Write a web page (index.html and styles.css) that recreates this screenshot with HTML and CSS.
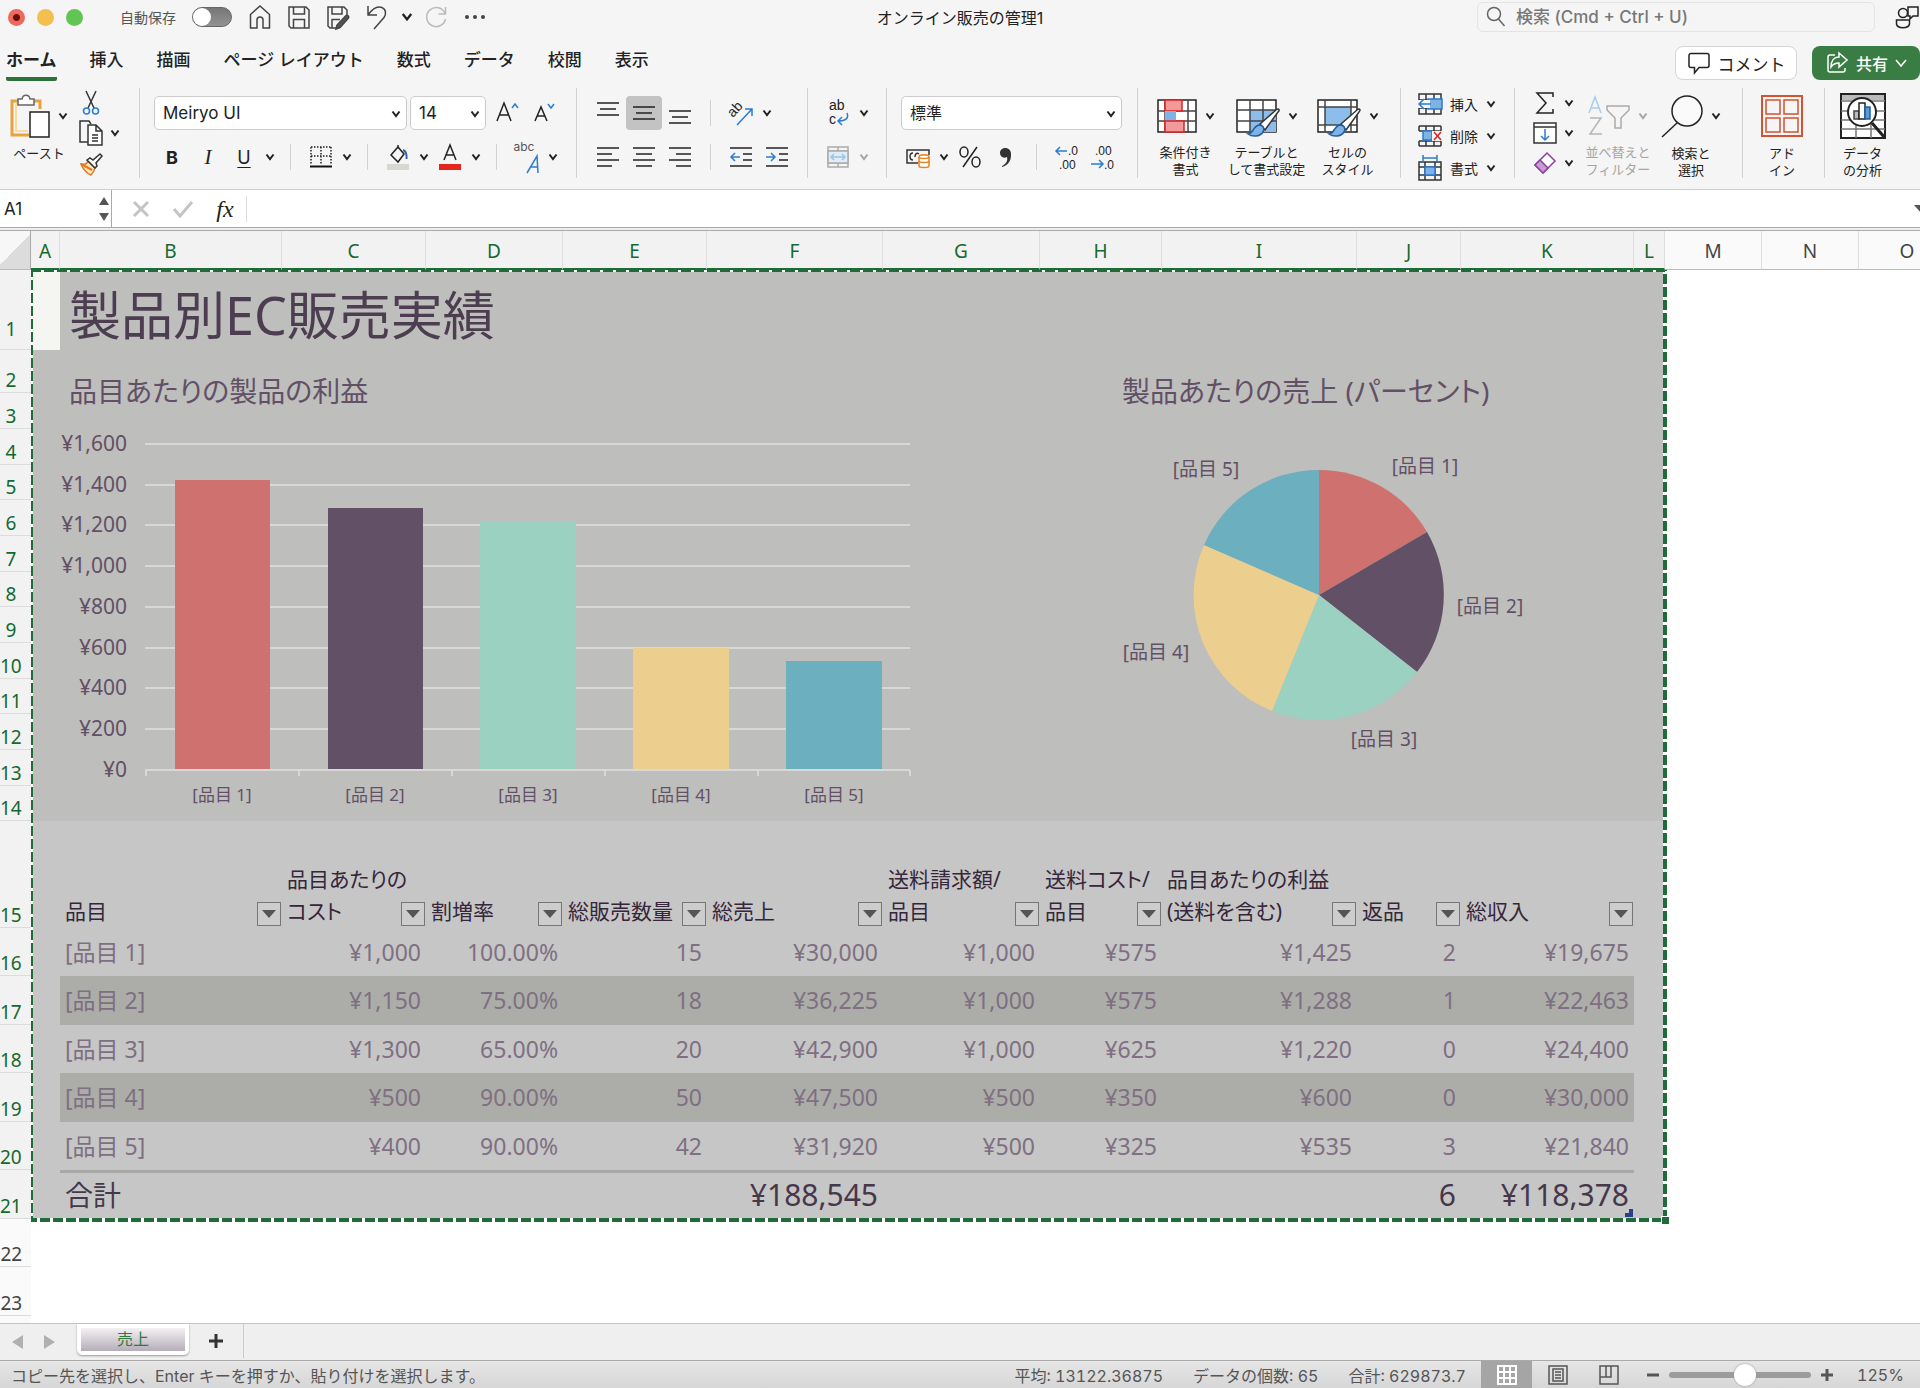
FILE: index.html
```html
<!doctype html>
<html lang="ja">
  <head>
    <meta charset="UTF-8" />
    <meta name="viewport" content="width=device-width, initial-scale=1.0" />
    <title>オンライン販売の管理1</title>
    <link rel="stylesheet" href="styles.css">
  </head>
  <body>
    <svg class="defs" aria-hidden="true">
      <symbol id="chev" viewBox="0 0 10 10"><path d="M1.5 2.5L5 7l3.500-4.500" fill="none" stroke="currentColor" stroke-width="2" /></symbol>
      <symbol id="drop" viewBox="0 0 14 10"><path d="M0 1h14L7 9z" fill="currentColor" /></symbol>
    </svg>

    <header class="titlebar">
      <div class="lights"><i class="red"></i><i class="yellow"></i><i class="green"></i></div>
      <label class="autosave">自動保存 <input type="checkbox" class="toggle" /></label>
      <div class="quick">
        <button aria-label="ホーム"><svg width="24" height="26" viewBox="0 0 24 26"><path d="M2.500 10.500L12 2l9.500 8.500V24H15v-8a3 3 0 0 0-6 0v8H2.500z" /></svg></button>
        <button aria-label="保存"><svg width="24" height="26" viewBox="0 0 24 26"><path d="M2 3h17l3 3v18H4l-2-2zM6.500 3v7h11V3M6.500 24v-8.500h11V24" /></svg></button>
        <button aria-label="名前を付けて保存"><svg width="24" height="26" viewBox="0 0 24 26"><path d="M11 24H4l-2-2V3h16l3 3v5M6 3v7h10V3M6 24v-8.500h8" /><path d="M10 25l1-4L20 11.500c1.500-1 3.500 1 2.500 2.500L14 23.500z" fill="#555" /></svg></button>
        <button aria-label="元に戻す"><svg width="24" height="26" viewBox="0 0 24 26"><path d="M3 2v9h9M3.500 10.500C8 4 13 2 17 3.500c4 2 4.500 6 2 10L9 25" /></svg></button>
        <button class="arrow" aria-label="元に戻すの履歴"><svg width="12" height="12"><use href="#chev" /></svg></button>
        <button class="off" aria-label="やり直し"><svg width="24" height="26" viewBox="0 0 24 26"><path d="M21.500 3v7h-7M21 9.500A9.500 9.500 0 1 0 21.500 15" /></svg></button>
        <button class="more" aria-label="その他"><svg width="24" height="26" viewBox="0 0 24 26"><g fill="#444" stroke="none"><circle cx="4" cy="13" r="2" /><circle cx="12" cy="13" r="2" /><circle cx="20" cy="13" r="2" /></g></svg></button>
      </div>
      <div class="doc-title">オンライン販売の管理1</div>
      <div class="search">
        <svg width="20" height="22" viewBox="0 0 20 22"><circle cx="8" cy="8" r="6.500" /><path d="M12.500 13l6 7" /></svg>
        <input type="search" aria-label="検索" placeholder="検索 (Cmd + Ctrl + U)" />
      </div>
      <button class="person" aria-label="共同作業"><svg width="30" height="26" viewBox="0 0 30 26"><circle cx="9" cy="9" r="4.500" /><path d="M2.500 16h13v4c-1 5-12 5-13 0zM14 3h10v9h-5l-3 3v-3h-2z" /></svg></button>
    </header>

    <nav class="tabs">
      <a href="#" class="current">ホーム</a>
      <a href="#">挿入</a>
      <a href="#">描画</a>
      <a href="#">ページ レイアウト</a>
      <a href="#">数式</a>
      <a href="#">データ</a>
      <a href="#">校閲</a>
      <a href="#">表示</a>
      <div class="actions">
        <button class="comment"><svg width="24" height="24" viewBox="0 0 24 24"><path d="M4 2.500h16a2 2 0 0 1 2 2v10a2 2 0 0 1-2 2h-8L7.500 22v-5.500H4a2 2 0 0 1-2-2v-10a2 2 0 0 1 2-2z" /></svg>コメント</button>
        <button class="share"><svg width="24" height="24" viewBox="0 0 24 24"><path d="M10 4H5a2 2 0 0 0-2 2v13a2 2 0 0 0 2 2h13a2 2 0 0 0 2-2v-2M14 2l8 7-8 7v-4c-4 0-6 1-8 4 0-6 3-10 8-10z" /></svg>共有<svg class="share-arrow" width="12" height="12" viewBox="0 0 12 12"><path d="M1 3l5 6 5-6" /></svg></button>
      </div>
    </nav>

    <section class="ribbon">
      <div class="group clip">
        <button class="big">
          <span class="face">
            <svg width="40" height="44" viewBox="0 0 40 44"><path d="M8 7H2v34h17M24 7h6v8" stroke="#e8a33d" stroke-width="3" /><path d="M6 10h4M6 10v27h12" stroke="#fbdca0" stroke-width="2" /><path d="M8 5h4c1-5 7-5 8 0h4v6H8z" fill="#fff" stroke="#666" /><path d="M20 18h19v25H20z" fill="#fff" stroke="#222" /></svg>
            <svg class="chev" width="10" height="10"><use href="#chev" /></svg>
          </span>
          <span>ペースト</span>
        </button>
        <div class="stack">
          <button class="mini" aria-label="切り取り"><svg width="24" height="28" viewBox="0 0 24 28"><path d="M7 2l8 17M17 2L9 19" stroke="#333" /><circle cx="7.500" cy="22" r="3" stroke="#2b7cd3" /><circle cx="16.500" cy="22" r="3" stroke="#2b7cd3" /></svg></button>
          <button class="mini" aria-label="コピー"><svg width="24" height="28" viewBox="0 0 24 28"><path d="M9 23H1V2h9l2 3" stroke="#333" /><path d="M9 6h8l6 6v14H9zM17 6v6h6M13 16h6M13 19h6M13 22h6" fill="#fff" stroke="#333" /></svg><svg class="chev" width="10" height="10"><use href="#chev" /></svg></button>
          <button class="mini" aria-label="書式のコピー"><svg width="24" height="28" viewBox="0 0 24 28"><path d="M2 15c4 1 6 0 7-3l7 7c-1 3-2 5-4 7C7 24 4 20 2 15z" fill="#fbe3bd" stroke="#e07b1f" /><path d="M2 15l11 6" stroke="#e07b1f" stroke-width="2" /><path d="M8 11l3-2 3 2 7-6 2 2-6 7 1 3-2 2z" fill="#fff" stroke="#333" /></svg></button>
        </div>
      </div>

      <div class="group font">
        <div class="row">
          <span class="select name"><select aria-label="フォント"><option>Meiryo UI</option></select><svg class="chev" width="10" height="10"><use href="#chev" /></svg></span>
          <span class="select size"><select aria-label="フォント サイズ"><option>14</option></select><svg class="chev" width="10" height="10"><use href="#chev" /></svg></span>
          <button class="tool" aria-label="フォント サイズの拡大"><svg width="24" height="24" viewBox="0 0 24 24"><path d="M1 20L8 2l7 18M4 14h8" /><path d="M16 7l3-4 3 4" stroke="#2b7cd3" /></svg></button>
          <button class="tool" aria-label="フォント サイズの縮小"><svg width="24" height="24" viewBox="0 0 24 24"><path d="M3 20L9 6l6 14M5 15h8" /><path d="M16 3l3 4 3-4" stroke="#2b7cd3" /></svg></button>
        </div>
        <div class="row">
          <button class="tool letter bold">B</button>
          <button class="tool letter italic">I</button>
          <button class="tool letter under">U</button>
          <button class="arrow" aria-label="下線の種類"><svg class="chev" width="10" height="10"><use href="#chev" /></svg></button>
          <span class="rule"></span>
          <button class="tool" aria-label="罫線"><svg width="22" height="22" viewBox="0 0 22 22"><path d="M1 1h20M1 1v18M21 1v18M11 1v18M1 10h20" stroke="#222" stroke-dasharray="1.500 1.500" /><path d="M0 20.500h22" stroke="#111" stroke-width="2" /></svg></button>
          <button class="arrow" aria-label="罫線の種類"><svg class="chev" width="10" height="10"><use href="#chev" /></svg></button>
          <span class="rule"></span>
          <button class="tool" aria-label="塗りつぶしの色"><svg width="24" height="26" viewBox="0 0 24 26"><path d="M5 11l7-8 6 7-6 8zM12 3V1" stroke="#222" /><path d="M17 6c3 1 4 4 3.500 9" stroke="#2b5fa8" stroke-width="2" /><path d="M1 20h22v6H1z" fill="#d8d8d2" stroke="none" /></svg></button>
          <button class="arrow" aria-label="塗りつぶしの色を選択"><svg class="chev" width="10" height="10"><use href="#chev" /></svg></button>
          <button class="tool" aria-label="フォントの色"><svg width="24" height="26" viewBox="0 0 24 26"><path d="M6 16l6-15 6 15M8 11h8" /><path d="M1 20h22v6H1z" fill="#e5261b" stroke="none" /></svg></button>
          <button class="arrow" aria-label="フォントの色を選択"><svg class="chev" width="10" height="10"><use href="#chev" /></svg></button>
          <span class="rule"></span>
          <button class="tool abc" aria-label="ふりがな"><span>abc</span><svg width="14" height="20" viewBox="0 0 14 20"><path d="M1 19L11 2l1 17M5 13h7" stroke="#2b7cd3" /></svg></button>
          <button class="arrow" aria-label="ふりがなの設定"><svg class="chev" width="10" height="10"><use href="#chev" /></svg></button>
        </div>
      </div>

      <div class="group align">
        <div class="row">
          <button class="tool" aria-label="上揃え"><svg width="22" height="22" viewBox="0 0 22 22"><path d="M0 1h22M3 7h16M0 13h22" /></svg></button>
          <button class="tool pressed" aria-label="上下中央揃え"><svg width="22" height="22" viewBox="0 0 22 22"><path d="M0 5h22M3 11h16M0 17h22" /></svg></button>
          <button class="tool" aria-label="下揃え"><svg width="22" height="22" viewBox="0 0 22 22"><path d="M0 9h22M3 15h16M0 21h22" /></svg></button>
          <span class="rule"></span>
          <button class="tool" aria-label="方向"><svg width="26" height="26" viewBox="0 0 26 26"><text x="5" y="18" transform="rotate(-48 5 18)" class="ab">ab</text><path d="M9 25L24 9M17 9h7v7" stroke="#2b7cd3" /></svg></button>
          <button class="arrow" aria-label="方向を選択"><svg class="chev" width="10" height="10"><use href="#chev" /></svg></button>
        </div>
        <div class="row">
          <button class="tool" aria-label="左揃え"><svg width="22" height="22" viewBox="0 0 22 22"><path d="M0 2h22M0 8h15M0 14h22M0 20h15" /></svg></button>
          <button class="tool" aria-label="中央揃え"><svg width="22" height="22" viewBox="0 0 22 22"><path d="M0 2h22M3 8h16M0 14h22M3 20h16" /></svg></button>
          <button class="tool" aria-label="右揃え"><svg width="22" height="22" viewBox="0 0 22 22"><path d="M0 2h22M7 8h15M0 14h22M7 20h15" /></svg></button>
          <span class="rule"></span>
          <button class="tool" aria-label="インデントを減らす"><svg width="22" height="22" viewBox="0 0 22 22"><path d="M0 2h22M13 8h9M13 14h9M0 20h22" /><path d="M10 11H1M5 7l-4 4 4 4" stroke="#2b7cd3" /></svg></button>
          <button class="tool" aria-label="インデントを増やす"><svg width="22" height="22" viewBox="0 0 22 22"><path d="M0 2h22M13 8h9M13 14h9M0 20h22" /><path d="M0 11h9M5 7l4 4-4 4" stroke="#2b7cd3" /></svg></button>
        </div>
      </div>

      <div class="group wrap">
        <div class="row">
          <button class="tool" aria-label="折り返して全体を表示"><svg width="24" height="28" viewBox="0 0 24 28"><text x="3" y="11" class="ab">ab</text><text x="3" y="25" class="ab">c</text><path d="M21 14c2 5-1 8-9 8M16 18l-4 4 4 4" stroke="#2b7cd3" /></svg></button>
          <button class="arrow" aria-label="折り返しの設定"><svg class="chev" width="10" height="10"><use href="#chev" /></svg></button>
        </div>
        <div class="row off">
          <button class="tool" aria-label="セルを結合" disabled><svg width="22" height="22" viewBox="0 0 22 22"><path d="M1 1h20v20H1zM1 5h20M1 17h20M11 1v4M11 17v4" stroke="#aaa" /><path d="M1 5h20v12H1z" fill="#e0edf8" stroke="#aaa" /><path d="M4 11h14M7 8l-3 3 3 3M15 8l3 3-3 3" stroke="#9cc3e6" /></svg></button>
          <button class="arrow" aria-label="結合の種類" disabled><svg class="chev" width="10" height="10"><use href="#chev" /></svg></button>
        </div>
      </div>

      <div class="group number">
        <div class="row">
          <span class="select format"><select aria-label="表示形式"><option>標準</option></select><svg class="chev" width="10" height="10"><use href="#chev" /></svg></span>
        </div>
        <div class="row">
          <button class="tool" aria-label="通貨表示形式"><svg width="24" height="22" viewBox="0 0 24 22"><path d="M12 17H1V4h22v5M7 7c-4 0-4 7 0 7M13 8c-3-2-4 1-4 3" stroke="#333" /><path d="M13 11c0-3 10-3 10 0v9c0 2-10 2-10 0z" fill="#fff" stroke="#e8831f" /><path d="M13 11c0 2 10 2 10 0M13 15c0 2 10 2 10 0" stroke="#e8831f" /></svg></button>
          <button class="arrow" aria-label="通貨を選択"><svg class="chev" width="10" height="10"><use href="#chev" /></svg></button>
          <button class="tool" aria-label="パーセント"><svg width="24" height="24" viewBox="0 0 24 24"><ellipse cx="6" cy="7" rx="4" ry="5" /><ellipse cx="18" cy="17" rx="4" ry="5" /><path d="M19 2L5 22" /></svg></button>
          <button class="tool" aria-label="桁区切り"><svg width="12" height="20" viewBox="0 0 12 20"><path d="M2 19c4-2 6-5 5-9-4 2-7-1-7-4 0-7 12-7 11 2 0 6-3 10-9 12z" fill="#333" stroke="none" /></svg></button>
          <span class="rule"></span>
          <button class="tool" aria-label="小数点以下の表示桁数を増やす"><svg width="24" height="26" viewBox="0 0 24 26"><text x="13" y="11" class="zero">.0</text><text x="4" y="25" class="zero">.00</text><path d="M12 7H1M5 3L1 7l4 4" stroke="#2b7cd3" /></svg></button>
          <button class="tool" aria-label="小数点以下の表示桁数を減らす"><svg width="24" height="26" viewBox="0 0 24 26"><text x="4" y="11" class="zero">.00</text><text x="13" y="25" class="zero">.0</text><path d="M0 20h12M8 16l4 4-4 4" stroke="#2b7cd3" /></svg></button>
        </div>
      </div>

      <div class="group styles">
        <button class="big">
          <span class="face">
            <svg width="40" height="36" viewBox="0 0 40 36"><path d="M1 2h38v32H1z" fill="#fff" stroke="#222" /><path d="M1 13h38M1 23h38M31 2v32M8 2v32" stroke="#444" /><path d="M8 2h17v11H8z" fill="#f29a9a" stroke="#d22" /><path d="M8 13h11v10H8z" fill="#7fb2e5" stroke="none" /><path d="M8 23h19v11H8z" fill="#f29a9a" stroke="#d22" /></svg>
            <svg class="chev" width="10" height="10"><use href="#chev" /></svg>
          </span>
          <span>条件付き<br />書式</span>
        </button>
        <button class="big">
          <span class="face">
            <svg width="44" height="40" viewBox="0 0 44 40"><path d="M1 4h39v32H1z" fill="#fff" stroke="#222" /><path d="M14 14h26v22H14z" fill="#8dbdea" stroke="none" /><path d="M1 14h39M1 25h39M14 4v32M27 4v32" stroke="#444" /><path d="M24 28l16-14c3-2 4 0 2 2L29 34z" fill="#fff" stroke="#333" /><path d="M12 38c5 0 5-8 11-9 4 0 6 3 4 7-3 5-11 5-15 2z" fill="#7fb2e5" stroke="#1e5fa3" /></svg>
            <svg class="chev" width="10" height="10"><use href="#chev" /></svg>
          </span>
          <span>テーブルと<br />して書式設定</span>
        </button>
        <button class="big">
          <span class="face">
            <svg width="44" height="40" viewBox="0 0 44 40"><path d="M1 4h39v32H1z" fill="#fff" stroke="#222" /><path d="M8 11h26v18H8z" fill="#8dbdea" stroke="none" /><path d="M1 11h39M1 29h39M8 4v32M34 4v32" stroke="#444" /><path d="M24 28l16-14c3-2 4 0 2 2L29 34z" fill="#fff" stroke="#333" /><path d="M12 38c5 0 5-8 11-9 4 0 6 3 4 7-3 5-11 5-15 2z" fill="#7fb2e5" stroke="#1e5fa3" /></svg>
            <svg class="chev" width="10" height="10"><use href="#chev" /></svg>
          </span>
          <span>セルの<br />スタイル</span>
        </button>
      </div>

      <div class="group cellgroup">
        <div class="stack">
          <button class="mini"><svg width="24" height="22" viewBox="0 0 24 22"><path d="M1 1h22v20H1zM1 7h22M1 15h22M8 1v20M16 1v20" stroke="#333" /><path d="M10 6h14v10H10z" fill="#7fb2e5" stroke="#2b7cd3" /><path d="M0 7h12v8H0z" fill="#f5f5f5" stroke="none" /><path d="M13 11H1M6 6l-5 5 5 5" stroke="#2b7cd3" /></svg><span>挿入</span><svg class="chev" width="10" height="10"><use href="#chev" /></svg></button>
          <button class="mini"><svg width="24" height="22" viewBox="0 0 24 22"><path d="M1 1h22M1 21h22M1 6h22M1 16h22M8 1v20M16 1v5M16 16v5M1 1v5M23 1v5M1 16v5M23 16v5" stroke="#333" /><path d="M5 6h9v9H5z" fill="#7fb2e5" stroke="#2b7cd3" /><path d="M14 6h10v10H14z" fill="#f5f5f5" stroke="none" /><path d="M16 7l7 8M23 7l-7 8" stroke="#d22" /></svg><span>削除</span><svg class="chev" width="10" height="10"><use href="#chev" /></svg></button>
          <button class="mini"><svg width="24" height="26" viewBox="0 0 24 26"><path d="M1 7h22v18H1zM1 12h22M1 20h22M7 7v18M17 7v18" stroke="#333" /><path d="M7 12h10v8H7z" fill="#7fb2e5" stroke="#2b7cd3" /><path d="M5 0v6M19 0v6M5 3h14" stroke="#2b7cd3" /></svg><span>書式</span><svg class="chev" width="10" height="10"><use href="#chev" /></svg></button>
        </div>
      </div>

      <div class="group edit">
        <div class="stack">
          <button class="mini" aria-label="オート SUM"><svg width="24" height="24" viewBox="0 0 24 24"><path d="M20 6V2H4l9 10-9 10h16v-4" /></svg><svg class="chev" width="10" height="10"><use href="#chev" /></svg></button>
          <button class="mini" aria-label="フィル"><svg width="24" height="22" viewBox="0 0 24 22"><path d="M1 1h22v20H1zM1 5h22" stroke="#333" fill="#fff" /><path d="M12 7v11M8 14l4 4 4-4" stroke="#2b7cd3" /></svg><svg class="chev" width="10" height="10"><use href="#chev" /></svg></button>
          <button class="mini" aria-label="クリア"><svg width="24" height="24" viewBox="0 0 24 24"><path d="M2 14L14 2l8 8L10 22z" fill="#fff" stroke="#8c3fa0" /><path d="M2 14l5-5 8 8-5 5z" fill="#c99ad6" stroke="#8c3fa0" /></svg><svg class="chev" width="10" height="10"><use href="#chev" /></svg></button>
        </div>
        <button class="big sort" disabled>
          <span class="face">
            <svg width="42" height="42" viewBox="0 0 42 42"><path d="M1 18L7 2l6 16M3 13h8" stroke="#a9cdee" /><path d="M2 23h11L2 39h12" stroke="#b5b5b5" /><path d="M19 11h22v4l-8 8v10h-6V23l-8-8z" stroke="#aaa" /></svg>
            <svg class="chev" width="10" height="10"><use href="#chev" /></svg>
          </span>
          <span>並べ替えと<br />フィルター</span>
        </button>
        <button class="big find">
          <span class="face">
            <svg width="42" height="44" viewBox="0 0 42 44"><circle cx="26" cy="17" r="15" stroke="#222" fill="#fafafa" /><path d="M16 29L1 43" stroke="#222" /></svg>
            <svg class="chev" width="10" height="10"><use href="#chev" /></svg>
          </span>
          <span>検索と<br />選択</span>
        </button>
      </div>

      <div class="group addin">
        <button class="big">
          <span class="face"><svg width="42" height="44" viewBox="0 0 42 44"><path d="M1 2h40v40H1z" stroke="#d35230" stroke-width="2" /><path d="M5 6h14v14H5zM23 6h14v14H23zM5 24h14v14H5zM23 24h14v14H23z" stroke="#d35230" /></svg></span>
          <span>アド<br />イン</span>
        </button>
      </div>

      <div class="group analyze">
        <button class="big">
          <span class="face"><svg width="46" height="46" viewBox="0 0 46 46"><path d="M1 1h44v44H1z" fill="#fff" stroke="#222" stroke-width="2" /><path d="M2 2h42v5H2z" fill="#bbb" stroke="none" /><path d="M1 8h44M1 18h44M1 27h44M1 36h44M16 27v18M31 27v18" stroke="#777" /><circle cx="22" cy="19" r="14" fill="#fff" stroke="#222" stroke-width="2" /><path d="M32 30l13 15" stroke="#222" stroke-width="3" /><path d="M14 18h5v8h-5z" fill="#bbb" stroke="#444" /><path d="M19 10h6v16h-6z" fill="#fff" stroke="#222" /><path d="M25 14h5v12h-5z" fill="#5b9bd5" stroke="#1e5fa3" /></svg></span>
          <span>データ<br />の分析</span>
        </button>
      </div>
    </section>

    <section class="formula-bar">
      <div class="name-box">
        <input type="text" value="A1" aria-label="名前ボックス" />
        <span class="stepper">
          <button aria-label="前へ"><svg width="10" height="8" viewBox="0 0 10 8"><path d="M0 8h10L5 0z" /></svg></button>
          <button aria-label="次へ"><svg width="10" height="8" viewBox="0 0 10 8"><path d="M0 0h10L5 8z" /></svg></button>
        </span>
      </div>
      <button class="entry" aria-label="キャンセル"><svg width="18" height="18" viewBox="0 0 18 18"><path d="M2 2l14 14M16 2L2 16" /></svg></button>
      <button class="entry" aria-label="入力"><svg width="20" height="18" viewBox="0 0 20 18"><path d="M1 9l6 7L19 2" /></svg></button>
      <button class="entry fx" aria-label="関数の挿入">fx</button>
      <input class="formula" type="text" aria-label="数式バー" />
      <svg class="expand" width="14" height="10"><use href="#drop" /></svg>
    </section>

    <main class="sheet">
      <div class="corner"></div>
      <div class="cols">
        <span>A</span><span>B</span><span>C</span><span>D</span><span>E</span><span>F</span><span>G</span><span>H</span><span>I</span><span>J</span><span>K</span><span>L</span><span class="plain">M</span><span class="plain">N</span><span class="plain">O</span>
      </div>
      <div class="rows">
        <span>1</span><span>2</span><span>3</span><span>4</span><span>5</span><span>6</span><span>7</span><span>8</span><span>9</span><span>10</span><span>11</span><span>12</span><span>13</span><span>14</span><span>15</span><span>16</span><span>17</span><span>18</span><span>19</span><span>20</span><span>21</span><span class="plain">22</span><span class="plain">23</span><span class="plain"></span>
      </div>
      <div class="cells">
        <div class="selection">
          <div class="report">
            <div class="heading">
              <div class="active-cell"></div>
              <h1>製品別EC販売実績</h1>
            </div>
            <div class="charts">
              <figure class="bar-chart">
                <figcaption>品目あたりの製品の利益</figcaption>
                <svg width="880" height="390" viewBox="0 0 880 390">
                  <g class="gridlines"><path d="M85 24h765M85 65h765M85 105h765M85 146h765M85 187h765M85 228h765M85 268h765M85 309h765M85 350h765" /><path d="M86 350v6M239 350v6M392 350v6M545 350v6M698 350v6M850 350v6" /></g>
                  <g class="axis">
                    <text x="67" y="31">¥1,600</text>
                    <text x="67" y="72">¥1,400</text>
                    <text x="67" y="112">¥1,200</text>
                    <text x="67" y="153">¥1,000</text>
                    <text x="67" y="194">¥800</text>
                    <text x="67" y="235">¥600</text>
                    <text x="67" y="275">¥400</text>
                    <text x="67" y="316">¥200</text>
                    <text x="67" y="357">¥0</text>
                  </g>
                  <rect class="c1" x="115" y="60" width="95" height="289" />
                  <rect class="c2" x="268" y="88" width="95" height="261" />
                  <rect class="c3" x="420" y="101" width="96" height="248" />
                  <rect class="c4" x="573" y="228" width="96" height="121" />
                  <rect class="c5" x="726" y="241" width="96" height="108" />
                  <g class="category">
                    <text x="162" y="381">[品目 1]</text>
                    <text x="315" y="381">[品目 2]</text>
                    <text x="468" y="381">[品目 3]</text>
                    <text x="621" y="381">[品目 4]</text>
                    <text x="774" y="381">[品目 5]</text>
                  </g>
                </svg>
              </figure>
              <figure class="pie-chart">
                <figcaption>製品あたりの売上 (パーセント)</figcaption>
                <svg width="440" height="350" viewBox="-221 -175 440 350">
                  <path class="c1" d="M0 0V-125A125 125 0 0 1 108 -63z" />
                  <path class="c2" d="M0 0L108 -63A125 125 0 0 1 98 77z" />
                  <path class="c3" d="M0 0L98 77A125 125 0 0 1 -47 116z" />
                  <path class="c4" d="M0 0L-47 116A125 125 0 0 1 -115 -50z" />
                  <path class="c5" d="M0 0L-115 -50A125 125 0 0 1 0 -125z" />
                  <g class="slice">
                    <text x="106" y="-122">[品目 1]</text>
                    <text x="171" y="18">[品目 2]</text>
                    <text x="65" y="151">[品目 3]</text>
                    <text x="-163" y="64">[品目 4]</text>
                    <text x="-113" y="-119">[品目 5]</text>
                  </g>
                </svg>
              </figure>
            </div>
          </div>

          <table>
            <colgroup>
              <col class="w-b" /><col class="w-c" /><col class="w-d" /><col class="w-e" /><col class="w-f" /><col class="w-g" /><col class="w-h" /><col class="w-i" /><col class="w-j" /><col class="w-k" />
            </colgroup>
            <thead>
              <tr>
                <th><div><span>品目</span><button aria-label="フィルター"><svg width="14" height="10"><use href="#drop" /></svg></button></div></th>
                <th><div><span>品目あたりの<br />コスト</span><button aria-label="フィルター"><svg width="14" height="10"><use href="#drop" /></svg></button></div></th>
                <th><div><span>割増率</span><button aria-label="フィルター"><svg width="14" height="10"><use href="#drop" /></svg></button></div></th>
                <th><div><span>総販売数量</span><button aria-label="フィルター"><svg width="14" height="10"><use href="#drop" /></svg></button></div></th>
                <th><div><span>総売上</span><button aria-label="フィルター"><svg width="14" height="10"><use href="#drop" /></svg></button></div></th>
                <th><div><span>送料請求額/<br />品目</span><button aria-label="フィルター"><svg width="14" height="10"><use href="#drop" /></svg></button></div></th>
                <th><div><span>送料コスト/<br />品目</span><button aria-label="フィルター"><svg width="14" height="10"><use href="#drop" /></svg></button></div></th>
                <th><div><span>品目あたりの利益<br />(送料を含む)</span><button aria-label="フィルター"><svg width="14" height="10"><use href="#drop" /></svg></button></div></th>
                <th><div><span>返品</span><button aria-label="フィルター"><svg width="14" height="10"><use href="#drop" /></svg></button></div></th>
                <th><div><span>総収入</span><button aria-label="フィルター"><svg width="14" height="10"><use href="#drop" /></svg></button></div></th>
              </tr>
            </thead>
            <tbody>
              <tr><td>[品目 1]</td><td>¥1,000</td><td>100.00%</td><td>15</td><td>¥30,000</td><td>¥1,000</td><td>¥575</td><td>¥1,425</td><td>2</td><td>¥19,675</td></tr>
              <tr><td>[品目 2]</td><td>¥1,150</td><td>75.00%</td><td>18</td><td>¥36,225</td><td>¥1,000</td><td>¥575</td><td>¥1,288</td><td>1</td><td>¥22,463</td></tr>
              <tr><td>[品目 3]</td><td>¥1,300</td><td>65.00%</td><td>20</td><td>¥42,900</td><td>¥1,000</td><td>¥625</td><td>¥1,220</td><td>0</td><td>¥24,400</td></tr>
              <tr><td>[品目 4]</td><td>¥500</td><td>90.00%</td><td>50</td><td>¥47,500</td><td>¥500</td><td>¥350</td><td>¥600</td><td>0</td><td>¥30,000</td></tr>
              <tr><td>[品目 5]</td><td>¥400</td><td>90.00%</td><td>42</td><td>¥31,920</td><td>¥500</td><td>¥325</td><td>¥535</td><td>3</td><td>¥21,840</td></tr>
            </tbody>
            <tfoot>
              <tr><td>合計</td><td></td><td></td><td></td><td>¥188,545</td><td></td><td></td><td></td><td>6</td><td>¥118,378</td></tr>
            </tfoot>
          </table>
          <svg class="ants"><rect class="ants-base" width="100%" height="100%" /><rect class="ants-dash" width="100%" height="100%" /></svg>
          <i class="table-end"></i>
          <i class="handle"></i>
        </div>
      </div>
    </main>

    <footer>
      <div class="sheet-tabs">
        <button class="nav" aria-label="前のシート"><svg width="12" height="14" viewBox="0 0 12 14"><path d="M12 0v14L1 7z" /></svg></button>
        <button class="nav" aria-label="次のシート"><svg width="12" height="14" viewBox="0 0 12 14"><path d="M0 0v14l11-7z" /></svg></button>
        <button class="sheet-tab"><span>売上</span></button>
        <button class="add" aria-label="シートの追加"><svg width="16" height="16" viewBox="0 0 16 16"><path d="M8 1v14M1 8h14" /></svg></button>
      </div>
      <div class="status">
        <span class="hint">コピー先を選択し、Enter キーを押すか、貼り付けを選択します。</span>
        <span>平均: 13122.36875</span>
        <span>データの個数: 65</span>
        <span>合計: 629873.7</span>
        <div class="views">
          <button class="on" aria-label="標準"><svg width="20" height="20" viewBox="0 0 20 20"><path d="M1 1h18v18H1zM1 7h18M1 13h18M7 1v18M13 1v18" /></svg></button>
          <button aria-label="ページ レイアウト"><svg width="20" height="20" viewBox="0 0 20 20"><path d="M1 1h18v18H1zM5 4h10v12H5zM7 7h6M7 10h6M7 13h6" /></svg></button>
          <button aria-label="改ページ プレビュー"><svg width="20" height="20" viewBox="0 0 20 20"><path d="M1 1h18v18H1zM1 12h11V1M7 1v11" /></svg></button>
        </div>
        <div class="zoom">
          <button aria-label="縮小"><svg width="14" height="14" viewBox="0 0 14 14"><path d="M1 7h12" /></svg></button>
          <input type="range" min="0" max="100" value="54" aria-label="ズーム" />
          <button aria-label="拡大"><svg width="14" height="14" viewBox="0 0 14 14"><path d="M1 7h12M7 1v12" /></svg></button>
        </div>
        <span class="percent">125%</span>
      </div>
    </footer>
  </body>
</html>
```

FILE: styles.css
```css
* {
  margin: 0;
  padding: 0;
  box-sizing: border-box;
}

body {
  font-family: Inter, "Noto Sans CJK JP", sans-serif;
  font-size: 14px;
  color: #222;
  background: #f5f5f5;
  height: 100vh;
  display: flex;
  flex-direction: column;
  overflow: hidden;
  white-space: nowrap;
}

button,
input,
select {
  font: inherit;
  color: inherit;
  background: none;
  border: none;
  outline: none;
}

button {
  display: flex;
  align-items: center;
  justify-content: center;
}

svg {
  flex: none;
  display: block;
  overflow: visible;
  fill: none;
  stroke: #222;
  stroke-width: 1.5;
}

.defs {
  position: absolute;
  width: 0;
  height: 0;
}

/* Title bar */
.titlebar {
  flex: 0 0 34px;
  display: flex;
  align-items: center;
  position: relative;
  padding-left: 8px;
  overflow: hidden;
}

.lights {
  display: flex;
  gap: 12px;
  margin-right: 37px;
}

.lights i {
  width: 17px;
  height: 17px;
  border-radius: 50%;
}

.red {
  background: radial-gradient(circle, #6b0f0a 3px, #ec6a5e 4px);
}

.yellow {
  background: #f4bf4f;
}

.green {
  background: #61c554;
}

.autosave {
  display: flex;
  align-items: center;
  gap: 16px;
  color: #555;
}

.toggle {
  appearance: none;
  width: 40px;
  height: 20px;
  border-radius: 10px;
  background: linear-gradient(#777, #929292);
  border: 1px solid #666;
}

.toggle::before {
  content: "";
  display: block;
  width: 18px;
  height: 18px;
  border-radius: 50%;
  background: #fff;
}

.quick {
  display: flex;
  align-items: center;
  gap: 15px;
  margin-left: 16px;
}

.quick svg {
  stroke: #444;
}

.quick .arrow {
  width: 12px;
  margin: 0 -4px 0 -3px;
}

.quick .off svg {
  stroke: #bbb;
}

.doc-title {
  position: absolute;
  left: 50%;
  transform: translateX(-50%);
  font-size: 16px;
}

.search {
  margin-left: auto;
  width: 398px;
  height: 30px;
  display: flex;
  align-items: center;
  gap: 10px;
  padding-left: 8px;
  border: 1px solid #e4e4e4;
  border-radius: 6px;
}

.search svg {
  stroke: #666;
}

.search input {
  flex: 1;
  font-size: 17px;
  font-weight: 500;
}

.search input::placeholder {
  color: #777;
}

.person {
  width: 26px;
  margin-left: 19px;
  justify-content: flex-start;
}

/* Ribbon tabs */
.tabs {
  flex: 0 0 54px;
  display: flex;
  align-items: flex-start;
  gap: 33px;
  padding: 10px 0 0 6px;
  font-size: 17px;
}

.tabs a {
  color: #222;
  text-decoration: none;
  line-height: 33px;
  font-weight: 500;
}

.tabs .current {
  font-weight: 700;
  border-bottom: 4px solid #2d7038;
  border-radius: 2px;
}

.actions {
  margin-left: auto;
  display: flex;
  gap: 15px;
  padding-top: 2px;
}

.actions button {
  height: 34px;
  gap: 7px;
  border-radius: 8px;
  font-size: 16px;
}

.actions .comment {
  width: 122px;
  background: #fff;
  border: 1px solid #d5d5d5;
  font-size: 17px;
}

.share {
  width: 108px;
  background: #3a7d44;
  color: #fff;
  font-weight: 500;
}

.share svg {
  stroke: #fff;
}

/* Ribbon */
.ribbon {
  flex: 0 0 102px;
  display: flex;
  align-items: flex-start;
  border-bottom: 1px solid #cfcfcf;
}

.group {
  flex: none;
  height: 90px;
  border-right: 1px solid #d2d2d2;
}

.clip {
  width: 140px;
  display: flex;
  padding-left: 10px;
}

.font {
  width: 437px;
  padding-left: 14px;
}

.align {
  width: 231px;
  padding-left: 13px;
}

.wrap {
  width: 79px;
  padding-left: 12px;
}

.number {
  width: 251px;
  padding-left: 13px;
}

.styles {
  width: 263px;
  padding-left: 7px;
  display: flex;
}

.cellgroup {
  width: 114px;
  padding-left: 17px;
}

.edit {
  width: 228px;
  padding-left: 18px;
  display: flex;
}

.addin {
  width: 82px;
  padding-right: 3px;
  display: flex;
}

.analyze {
  flex: 1;
  padding-right: 20px;
  border-right: none;
  display: flex;
}

.row {
  height: 34px;
  margin-top: 8px;
  display: flex;
  align-items: center;
}

.row + .row {
  margin-top: 10px;
}

.tool {
  width: 36px;
  height: 34px;
}

.tool.pressed {
  background: #c3c3c3;
  border-radius: 4px;
}

.arrow {
  width: 16px;
  height: 34px;
}

.off,
.sort {
  color: #a5a5a5;
}

.rule {
  width: 1px;
  height: 26px;
  margin: 0 12px;
  background: #d2d2d2;
}

.letter {
  font-size: 18px;
}

.bold {
  font-weight: 700;
}

.italic {
  font-family: "Liberation Serif", serif;
  font-style: italic;
  font-size: 21px;
}

.under {
  text-decoration: underline;
  text-underline-offset: 3px;
}

.abc {
  align-items: flex-start;
  font-size: 12px;
  line-height: 14px;
  color: #555;
}

.abc svg {
  align-self: flex-end;
  margin-left: -8px;
}

.ab,
.zero {
  font-family: "Liberation Sans", sans-serif;
  font-size: 14px;
  fill: #222;
  stroke: none;
}

.zero {
  font-size: 12px;
}

.select {
  position: relative;
  height: 34px;
  background: #fff;
  border: 1px solid #cbcbcb;
  border-radius: 5px;
}

.select select {
  appearance: none;
  width: 100%;
  height: 100%;
  padding-left: 8px;
  font-size: 17px;
}

.select .chev {
  position: absolute;
  right: 5px;
  top: 12px;
}

.name {
  width: 253px;
}

.size {
  width: 76px;
  margin: 0 4px 0 3px;
}

.format {
  width: 221px;
  margin-left: 1px;
}

.format select {
  font-size: 16px;
}

.big {
  flex-direction: column;
  justify-content: flex-start;
  font-size: 13px;
  line-height: 17px;
  padding-top: 6px;
}

.styles .big {
  width: 81px;
}

.addin .big,
.analyze .big {
  width: 100%;
}

.sort {
  width: 70px;
}

.find {
  width: 76px;
}

.face {
  height: 44px;
  margin-bottom: 7px;
  display: flex;
  align-items: center;
  gap: 8px;
}

.stack {
  display: flex;
  flex-direction: column;
}

.clip .stack {
  margin-left: 11px;
}

.mini {
  height: 32px;
  justify-content: flex-start;
  gap: 7px;
  font-size: 14px;
}

.mini span {
  padding: 0 1px;
}

.edit .stack {
  width: 50px;
}

/* Formula bar */
.formula-bar {
  flex: 0 0 41px;
  display: flex;
  align-items: center;
  background: #fff;
  border-bottom: 1px solid #aaa;
  box-shadow: inset 0 -2px #eee, inset 0 -3px #aaa;
  padding-bottom: 2px;
}

.name-box {
  width: 112px;
  height: 38px;
  display: flex;
  align-items: center;
  border-right: 1px solid #aaa;
}

.name-box input {
  width: 99px;
  padding-left: 4px;
  font-size: 17px;
}

.stepper {
  display: flex;
  flex-direction: column;
  gap: 8px;
}

.stepper path,
.nav path {
  fill: #555;
  stroke: none;
}

.entry {
  width: 42px;
  height: 36px;
}

.entry:nth-of-type(1) {
  margin-left: 8px;
}

.entry path {
  stroke: #c4c4c4;
  stroke-width: 3;
}

.fx {
  font: italic 24px "Liberation Serif", serif;
}

.formula {
  flex: 1;
  height: 26px;
  border-left: 1px solid #ddd;
}

.expand {
  color: #555;
  stroke: none;
  margin-right: -8px;
}

/* Sheet */
.sheet {
  flex: 1;
  min-height: 0;
  display: grid;
  grid-template: 39px 1fr / 31px 1fr;
  overflow: hidden;
  background: #fff;
  font-family: "Noto Sans", "Noto Sans CJK JP", sans-serif;
}

.corner {
  background: linear-gradient(135deg, #f7f7f7 50%, #dcdcdc 50%);
  border-right: 1px solid #aaa;
  border-bottom: 1px solid #bbb;
}

.cols {
  display: grid;
  grid-template-columns: 29px 222px 144px 137px 144px 176px 157px 122px 195px 104px 173px 31px 97px 97px 97px;
  overflow: hidden;
  background: #fafafa;
}

.cols span {
  display: flex;
  align-items: center;
  justify-content: center;
  padding-top: 2px;
  font-size: 19px;
  color: #14692e;
  background: #f2f2f2;
  border-right: 1px solid #dedede;
  border-bottom: 2px solid #1d6b35;
}

.cols .plain {
  color: #444;
  background: #fafafa;
  border-bottom: 1px solid #bbb;
}

.rows {
  display: grid;
  grid-template-rows: 80px 43px repeat(4, 36px 36px 35px) 107px repeat(4, 48px 49px) 48px;
  overflow: hidden;
  min-height: 0;
}

.rows span {
  display: flex;
  align-items: flex-end;
  justify-content: center;
  padding-right: 13px;
  font-size: 19px;
  line-height: 24px;
  color: #14692e;
  background: #f2f2f2;
  border-bottom: 1px solid #dcdcdc;
  border-right: 2px solid #1d6b35;
}

.rows span:first-child {
  padding-bottom: 8px;
}

.rows .plain {
  color: #444;
  background: #fafafa;
  border-right: 1px solid #aaa;
}

.cells {
  min-height: 0;
  overflow: hidden;
}

.selection {
  position: relative;
  width: 1634px;
  background: #c6c6c6;
}

.report {
  height: 551px;
  background: #bebebc;
}

.heading {
  display: flex;
  height: 80px;
}

.active-cell {
  width: 29px;
  background: #f5f5f2;
}

h1 {
  font-size: 52px;
  font-weight: 400;
  line-height: 90px;
  padding-left: 9px;
  color: #4c3d50;
}

.charts {
  display: flex;
  padding-left: 29px;
}

figure {
  padding-top: 20px;
}

.bar-chart {
  width: 1038px;
}

figcaption {
  font-size: 28px;
  line-height: 42px;
  padding-left: 9px;
  color: #625066;
  font-feature-settings: "palt";
}

figure svg {
  margin-top: 8px;
}

.pie-chart figcaption {
  padding-left: 24px;
}

figure text {
  fill: #625066;
  stroke: none;
}

.gridlines {
  stroke: #d8d8d7;
  stroke-width: 2;
}

.axis {
  font-size: 21px;
  text-anchor: end;
}

.category {
  font-size: 17px;
  text-anchor: middle;
}

.slice {
  font-size: 19px;
  text-anchor: middle;
}

.c1 {
  fill: #cf716e;
  stroke: none;
}

.c2 {
  fill: #625066;
  stroke: none;
}

.c3 {
  fill: #9ad1c0;
  stroke: none;
}

.c4 {
  fill: #eccf8f;
  stroke: none;
}

.c5 {
  fill: #6cafbe;
  stroke: none;
}

table {
  width: 1574px;
  margin-left: 29px;
  table-layout: fixed;
  border-collapse: separate;
  border-spacing: 0;
  font-size: 23px;
  line-height: 32px;
  color: #7f6f82;
}

.w-b { width: 222px; }
.w-c { width: 144px; }
.w-d { width: 137px; }
.w-e { width: 144px; }
.w-f { width: 176px; }
.w-g { width: 157px; }
.w-h { width: 122px; }
.w-i { width: 195px; }
.w-j { width: 104px; }
.w-k { width: 173px; }

th {
  height: 107px;
  vertical-align: bottom;
  text-align: left;
  font-size: 21px;
  font-weight: 400;
  color: #35263b;
  font-feature-settings: "palt";
}

th div {
  display: flex;
  align-items: flex-end;
  padding: 0 1px 1px 5px;
}

th span {
  flex: 1;
  width: 0;
}

th button {
  width: 24px;
  height: 24px;
  margin-bottom: 1px;
  border: 1px solid #777;
  background: #cdcdcd;
  color: #555;
}

th svg {
  stroke: none;
}

td {
  height: 48px;
  padding: 0 5px 1px;
  text-align: right;
}

td:first-child {
  text-align: left;
}

tbody tr:nth-child(even) td {
  height: 49px;
  background: #acada8;
}

tfoot td {
  height: 50px;
  padding-bottom: 3px;
  border-top: 3px solid #a8a9a6;
  font-size: 30px;
  color: #46374b;
}

tfoot td:first-child {
  font-size: 28px;
}

.ants {
  position: absolute;
  left: 0;
  top: 0;
  width: 100%;
  height: 100%;
}

.ants-base {
  stroke: #fff;
  stroke-width: 4;
}

.ants-dash {
  stroke: #1f6b3a;
  stroke-width: 4;
  stroke-dasharray: 10 3;
}

.table-end {
  position: absolute;
  right: 32px;
  bottom: 3px;
  width: 8px;
  height: 8px;
  border-right: 4px solid #2c3f8c;
  border-bottom: 4px solid #2c3f8c;
}

.handle {
  position: absolute;
  right: -4px;
  bottom: -4px;
  width: 8px;
  height: 8px;
  background: #1f6b3a;
  border-left: 1px solid #fff;
  border-top: 1px solid #fff;
}

/* Sheet tabs and status bar */
.sheet-tabs {
  height: 38px;
  display: flex;
  align-items: flex-start;
  background: #efefef;
  border-top: 1px solid #c5c5c5;
  border-bottom: 1px solid #aaa;
}

.nav {
  width: 33px;
  height: 36px;
}

.nav path {
  fill: #b0b0b0;
}

.sheet-tab {
  width: 112px;
  height: 31px;
  margin-left: 11px;
  padding: 4px;
  background: #fff;
  border-radius: 0 0 5px 5px;
  box-shadow: 0 1px 2px #999;
}

.sheet-tab span {
  width: 100%;
  line-height: 23px;
  font-size: 16px;
  color: #2f7a42;
  background: linear-gradient(#f3f1f4, #b5adb8);
}

.add {
  width: 55px;
  height: 34px;
  border-right: 1px solid #ccc;
}

.add path {
  stroke: #333;
  stroke-width: 3;
}

.status {
  height: 27px;
  display: flex;
  align-items: center;
  gap: 30px;
  padding-left: 11px;
  background: linear-gradient(#e6e6e6, #d6d6d6);
  font-size: 16px;
  font-variant-numeric: tabular-nums;
  color: #555;
}

.hint {
  margin-right: auto;
}

.views {
  display: flex;
  margin-left: -15px;
}

.views button {
  width: 51px;
  height: 27px;
}

.views .on {
  background: #a5a5a5;
}

.views svg,
.zoom svg {
  stroke: #555;
}

.views .on svg {
  stroke: #fff;
  stroke-width: 2;
}

.zoom {
  display: flex;
  align-items: center;
  gap: 9px;
  margin-left: -18px;
}

.zoom svg {
  stroke-width: 3;
}

.zoom input {
  appearance: none;
  width: 142px;
  height: 6px;
  border-radius: 3px;
  background: #9c9c9c;
}

.zoom input::-webkit-slider-thumb {
  appearance: none;
  width: 22px;
  height: 22px;
  border-radius: 50%;
  background: #fff;
  box-shadow: 0 0 2px #888;
}

.percent {
  width: 63px;
  margin-left: -7px;
}
```
